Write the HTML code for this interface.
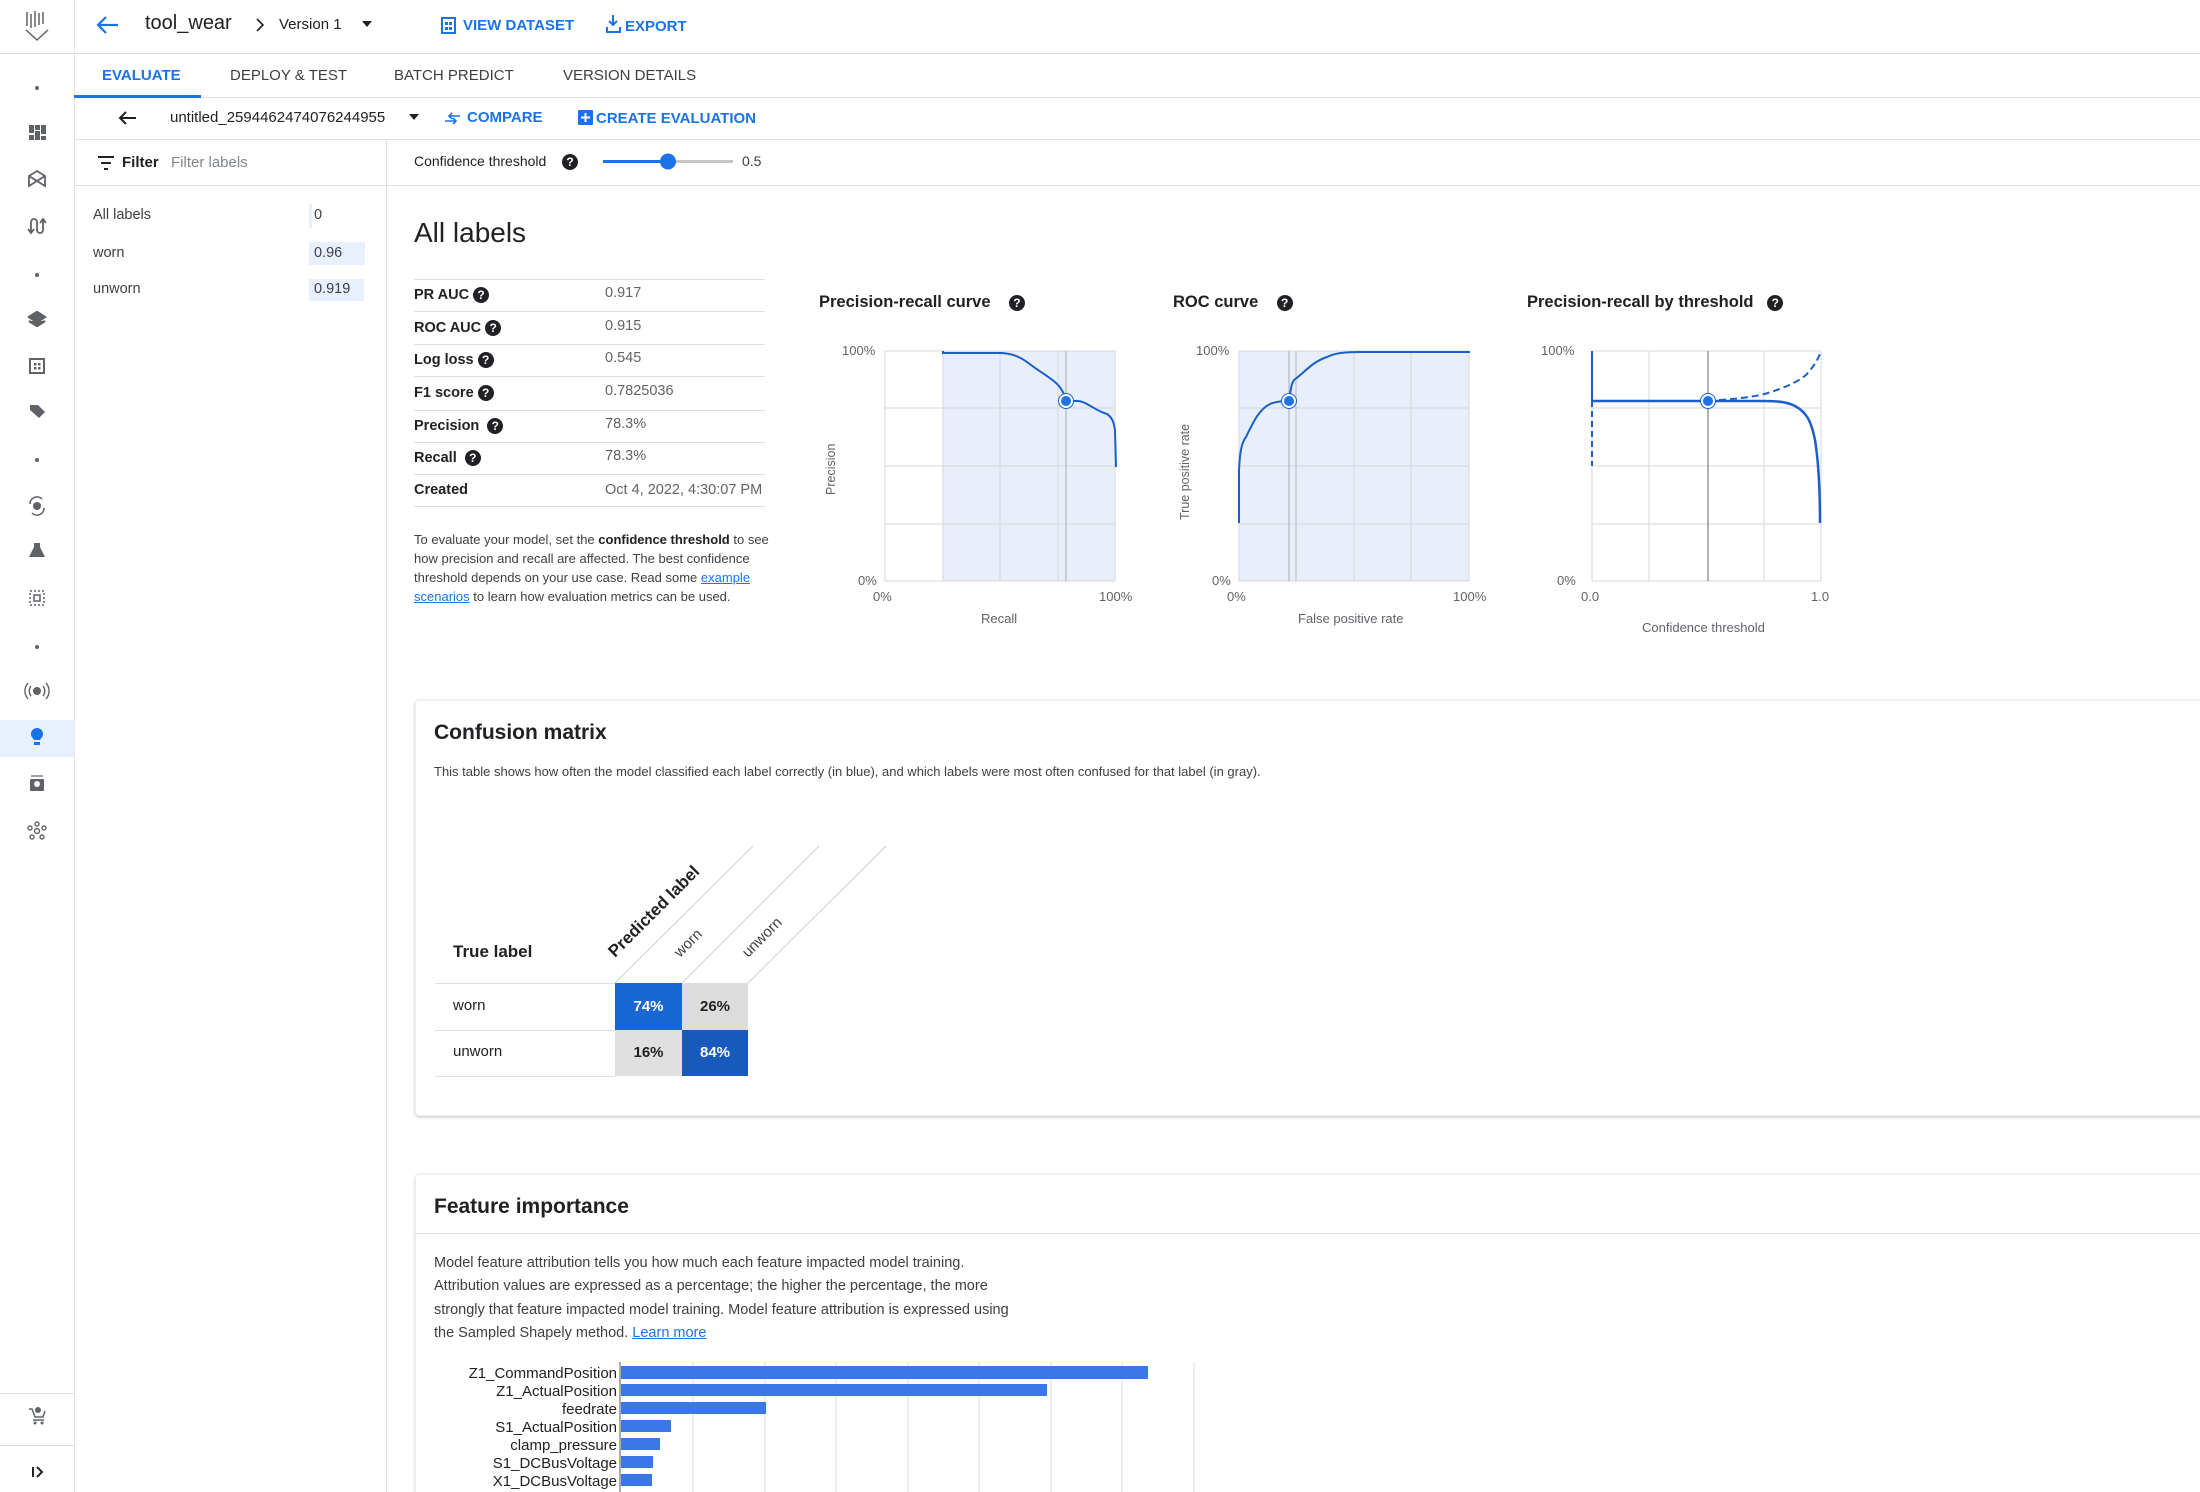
<!DOCTYPE html>
<html><head><meta charset="utf-8">
<style>
*{margin:0;padding:0;box-sizing:border-box}
html,body{width:2200px;height:1492px;overflow:hidden}
body{background:#fff;font-family:"Liberation Sans",Arial,sans-serif;color:#202124;position:relative}
.a{position:absolute;white-space:nowrap}
.blue{color:#1a73e8}
.hl{position:absolute;height:1px;background:#e0e0e0}
.vl{position:absolute;width:1px;background:#e0e0e0}
.q{display:inline-block;width:16px;height:16px;border-radius:50%;background:#202124;color:#fff;font-size:12px;font-weight:bold;text-align:center;line-height:16px;vertical-align:middle}
.met{position:absolute;left:414px;font-size:14.5px;font-weight:bold}
.val{position:absolute;left:605px;font-size:14.5px;color:#5f6368}
</style></head><body>

<div class="vl" style="left:74px;top:0;height:1492px;background:#e6e6e6"></div>
<div style="position:absolute;left:0;top:720px;width:74px;height:37px;background:#e8f0fe"></div>
<div class="hl" style="left:0;top:1393px;width:74px"></div>
<div class="hl" style="left:0;top:1445px;width:74px"></div>
<div class="hl" style="left:0;top:53px;width:2200px"></div>
<div class="hl" style="left:74px;top:97px;width:2126px"></div>
<div class="hl" style="left:74px;top:139px;width:2126px"></div>
<div style="position:absolute;left:74px;top:95px;width:127px;height:3px;background:#1a73e8"></div>
<div class="vl" style="left:386px;top:139px;height:1353px"></div>
<div class="hl" style="left:74px;top:185px;width:312px"></div>
<div class="hl" style="left:386px;top:185px;width:1814px"></div>

<!-- confusion card -->
<div style="position:absolute;left:415px;top:700px;width:1800px;height:416px;border:1px solid #eee;box-shadow:0 1px 3px rgba(0,0,0,.25);border-radius:4px"></div>
<!-- feature card -->
<div style="position:absolute;left:415px;top:1174px;width:1800px;height:330px;border:1px solid #eee;box-shadow:0 1px 3px rgba(0,0,0,.2);border-radius:4px"></div>

<svg class="a" style="left:0;top:0" width="2200" height="1492" viewBox="0 0 2200 1492" font-family="Liberation Sans, Arial, sans-serif">
 <g stroke="#5f6368" stroke-width="1.5" fill="none">
  <path d="M27 12v14M31 14v14M35 11v16M39 13v12M43 12v12"/>
  <path d="M26 30l11 10 11-10"/>
 </g>
 <g fill="#5f6368" stroke="#5f6368">
  <circle cx="37" cy="88" r="2" stroke="none"/>
  <g stroke="none"><rect x="29" y="125" width="5" height="8"/><rect x="29" y="135" width="5" height="5"/><rect x="35" y="125" width="5" height="5"/><rect x="35" y="131" width="5" height="9"/><rect x="41" y="125" width="5" height="9"/><rect x="41" y="136" width="5" height="4"/></g>
  <path d="M29 176l8-5 8 5v10l-8-5-8 5z M29 176l16 10 M45 176l-16 10" fill="none" stroke-width="1.8"/>
  <path d="M31 232v-10a3 3 0 0 1 6 0v8a3 3 0 0 0 6 0v-10 M28 229l3 4 3-4 M40 223l3-4 3 4" fill="none" stroke-width="1.8"/>
  <circle cx="37" cy="275" r="2" stroke="none"/>
  <path d="M29 317l8-5 8 5-8 5z M29 321l8 5 8-5" stroke-width="2.5" stroke-linejoin="round"/>
  <rect x="30" y="359" width="14" height="14" fill="none" stroke-width="2"/>
  <g stroke="none"><rect x="34" y="363" width="2.5" height="2.5"/><rect x="38" y="363" width="2.5" height="2.5"/><rect x="34" y="367" width="2.5" height="2.5"/><rect x="38" y="367" width="2.5" height="2.5"/></g>
  <path d="M30 405h8l7 7-6 6-9-8z" stroke="none"/>
  <circle cx="37" cy="460" r="2" stroke="none"/>
  <circle cx="37" cy="506" r="4" stroke="none"/><path d="M30 504a7 7 0 0 1 12-5 M44 508a7 7 0 0 1-12 5" fill="none" stroke-width="1.6"/>
  <path d="M34 543h6v4l5 10h-16l5-10z" stroke="none"/>
  <rect x="30" y="591" width="14" height="14" fill="none" stroke-width="1.5" stroke-dasharray="2 2"/><rect x="34" y="595" width="6" height="6" fill="none" stroke-width="1.5"/>
  <circle cx="37" cy="647" r="2" stroke="none"/>
  <circle cx="37" cy="691" r="4" stroke="none"/><path d="M31 686a8 8 0 0 0 0 10 M43 686a8 8 0 0 1 0 10 M28 683a12 12 0 0 0 0 16 M46 683a12 12 0 0 1 0 16" fill="none" stroke-width="1.4"/>
  <path d="M31 734a6 6 0 0 1 12 0c0 3-2 4-3 6h-6c-1-2-3-3-3-6z M34 742h6v3h-6z" fill="#1a73e8" stroke="none"/>
  <rect x="30" y="779" width="14" height="12" rx="1" stroke="none"/><path d="M31 776h12" stroke-width="1.2"/><circle cx="37" cy="784" r="3" fill="#fff" stroke="none"/>
  <g fill="none" stroke-width="1.4"><circle cx="37" cy="831" r="2.5"/><circle cx="37" cy="824" r="2"/><circle cx="30" cy="828" r="2"/><circle cx="44" cy="828" r="2"/><circle cx="32" cy="837" r="2"/><circle cx="42" cy="837" r="2"/></g>
  <path d="M29 1409h3l3 8h8l2-6 M33 1420h11" fill="none" stroke-width="1.5"/><circle cx="38" cy="1410" r="3" stroke="none"/><circle cx="35" cy="1423" r="1.5" stroke="none"/><circle cx="42" cy="1423" r="1.5" stroke="none"/>
  <path d="M33 1467v10 M37 1467l5 5-5 5" fill="none" stroke="#202124" stroke-width="2"/>
 </g>
 <path d="M118 25h-20 M106 17l-8 8 8 8" fill="none" stroke="#1a73e8" stroke-width="2.2"/>
 <path d="M257 19l6 6-6 6" fill="none" stroke="#202124" stroke-width="1.6"/>
 <path d="M362 21h10l-5 6z" fill="#202124"/>
 <rect x="442" y="18" width="13" height="15" fill="none" stroke="#1a73e8" stroke-width="2"/>
 <g fill="#1a73e8"><rect x="445" y="22" width="3" height="3"/><rect x="449" y="22" width="3" height="3"/><rect x="445" y="27" width="3" height="3"/><rect x="449" y="27" width="3" height="3"/></g>
 <path d="M613 15v10 M609 21l4 4 4-4 M607 27v5h13v-5" fill="none" stroke="#1a73e8" stroke-width="2"/>
 <path d="M136 118h-16 M126 112l-6 6 6 6" fill="none" stroke="#202124" stroke-width="2"/>
 <path d="M409 114h10l-5 6z" fill="#202124"/>
 <path d="M445 121h10 M453 118l3 3-3 3 M450 116h10 M452 113l-3 3 3 3" fill="none" stroke="#1a73e8" stroke-width="1.6"/>
 <rect x="578" y="110" width="15" height="15" rx="1" fill="#1a73e8"/><path d="M585.5 113v9 M581 117.5h9" stroke="#fff" stroke-width="2"/>
 <path d="M98 157h16 M101 163h10 M104 169h4" stroke="#202124" stroke-width="2"/>
 <rect x="603" y="160" width="130" height="3" fill="#c6c6c6"/>
 <rect x="603" y="160" width="65" height="3" fill="#1a73e8"/>
 <circle cx="668" cy="161.5" r="8" fill="#1a73e8"/>

 <g font-size="13" fill="#5f6368">
 <!-- PR -->
 <rect x="943" y="351" width="172" height="230" fill="#e8eefa"/>
 <g stroke="#d5d7da" stroke-width="1"><line x1="885" y1="351" x2="1115" y2="351"/><line x1="885" y1="408" x2="1115" y2="408"/><line x1="885" y1="466" x2="1115" y2="466"/><line x1="885" y1="524" x2="1115" y2="524"/><line x1="885" y1="581" x2="1115" y2="581"/><line x1="885" y1="351" x2="885" y2="581"/><line x1="943" y1="351" x2="943" y2="581"/><line x1="1000" y1="351" x2="1000" y2="581"/><line x1="1058" y1="351" x2="1058" y2="581"/><line x1="1115" y1="351" x2="1115" y2="581"/></g>
 <line x1="1066" y1="351" x2="1066" y2="581" stroke="#aaa"/>
 <path d="M943 351V353H1002C1015 354 1022 358 1031 365C1040 372 1052 378 1059 386C1063 391 1065 396 1066 401H1075C1086 400 1093 410 1107 414C1113 418 1114 424 1115 430L1116 467" fill="none" stroke="#1a5fc8" stroke-width="2"/>
 <circle cx="1066" cy="401" r="6" fill="#1a73e8" stroke="#fff" stroke-width="2"/><circle cx="1066" cy="401" r="7.5" fill="none" stroke="#1a5fc8" stroke-width="1"/>
 <text x="842" y="355">100%</text><text x="858" y="585">0%</text>
 <text x="873" y="601">0%</text><text x="1099" y="601">100%</text>
 <text x="981" y="623">Recall</text>
 <text transform="translate(835 495) rotate(-90)" font-size="12.5">Precision</text>

 <!-- ROC -->
 <rect x="1239" y="351" width="230" height="230" fill="#e8eefa"/>
 <g stroke="#d5d7da"><line x1="1239" y1="351" x2="1469" y2="351"/><line x1="1239" y1="408" x2="1469" y2="408"/><line x1="1239" y1="466" x2="1469" y2="466"/><line x1="1239" y1="524" x2="1469" y2="524"/><line x1="1239" y1="581" x2="1469" y2="581"/><line x1="1239" y1="351" x2="1239" y2="581"/><line x1="1296" y1="351" x2="1296" y2="581"/><line x1="1354" y1="351" x2="1354" y2="581"/><line x1="1411" y1="351" x2="1411" y2="581"/><line x1="1469" y1="351" x2="1469" y2="581"/></g>
 <line x1="1289" y1="351" x2="1289" y2="581" stroke="#aaa"/>
 <line x1="1296" y1="351" x2="1296" y2="581" stroke="#bbb"/>
 <path d="M1239 523V470C1240 450 1242 442 1246 437C1252 425 1258 410 1270 404C1280 400 1286 402 1289 400C1291 390 1291 384 1294 380C1305 372 1312 362 1327 357C1335 353 1345 352 1360 352H1470" fill="none" stroke="#1a5fc8" stroke-width="2"/>
 <circle cx="1289" cy="401" r="6" fill="#1a73e8" stroke="#fff" stroke-width="2"/><circle cx="1289" cy="401" r="7.5" fill="none" stroke="#1a5fc8"/>
 <text x="1196" y="355">100%</text><text x="1212" y="585">0%</text>
 <text x="1227" y="601">0%</text><text x="1453" y="601">100%</text>
 <text x="1298" y="623">False positive rate</text>
 <text transform="translate(1189 520) rotate(-90)" font-size="12.5">True positive rate</text>

 <!-- threshold -->
 <g stroke="#d5d7da"><line x1="1592" y1="351" x2="1821" y2="351"/><line x1="1592" y1="408" x2="1821" y2="408"/><line x1="1592" y1="466" x2="1821" y2="466"/><line x1="1592" y1="524" x2="1821" y2="524"/><line x1="1592" y1="581" x2="1821" y2="581"/><line x1="1592" y1="351" x2="1592" y2="581"/><line x1="1649" y1="351" x2="1649" y2="581"/><line x1="1764" y1="351" x2="1764" y2="581"/><line x1="1821" y1="351" x2="1821" y2="581"/></g>
 <line x1="1708" y1="351" x2="1708" y2="581" stroke="#666"/>
 <path d="M1592 351v50" fill="none" stroke="#1a5fc8" stroke-width="2"/>
 <path d="M1592 401v65" fill="none" stroke="#1a5fc8" stroke-width="2" stroke-dasharray="6 4"/>
 <path d="M1592 401H1760C1780 401 1787 402 1795 406C1806 412 1811 420 1815 440C1819 465 1820 500 1820 523" fill="none" stroke="#1a5fc8" stroke-width="2.5"/>
 <path d="M1708 401C1735 399 1755 397 1768 393C1790 386 1800 380 1806 375C1814 366 1818 360 1821 351" fill="none" stroke="#1a5fc8" stroke-width="2" stroke-dasharray="7 4"/>
 <circle cx="1708" cy="401" r="6" fill="#1a73e8" stroke="#fff" stroke-width="2"/><circle cx="1708" cy="401" r="7.5" fill="none" stroke="#1a5fc8"/>
 <text x="1541" y="355">100%</text><text x="1557" y="585">0%</text>
 <text x="1581" y="601">0.0</text><text x="1811" y="601">1.0</text>
 <text x="1642" y="632">Confidence threshold</text>
 </g>

 <g stroke="#d0d0d0" stroke-width="1">
  <line x1="615" y1="983" x2="753" y2="846"/><line x1="682" y1="983" x2="819" y2="846"/><line x1="748" y1="983" x2="886" y2="846"/>
 </g>
 <text transform="translate(615 958) rotate(-45)" font-size="17" font-weight="bold" fill="#202124">Predicted label</text>
 <text transform="translate(680 958) rotate(-45)" font-size="15" fill="#3c4043">worn</text>
 <text transform="translate(748 958) rotate(-45)" font-size="15" fill="#3c4043">unworn</text>

 <g stroke="#dadce0"><line x1="693" y1="1362" x2="693" y2="1492"/><line x1="765" y1="1362" x2="765" y2="1492"/><line x1="836" y1="1362" x2="836" y2="1492"/><line x1="908" y1="1362" x2="908" y2="1492"/><line x1="979" y1="1362" x2="979" y2="1492"/><line x1="1051" y1="1362" x2="1051" y2="1492"/><line x1="1122" y1="1362" x2="1122" y2="1492"/><line x1="1194" y1="1362" x2="1194" y2="1492"/></g>
 <line x1="620" y1="1362" x2="620" y2="1492" stroke="#555"/>
 <g fill="#3b78e7">
  <rect x="621" y="1366" width="527" height="13"/><rect x="621" y="1384" width="426" height="12"/><rect x="621" y="1402" width="145" height="12"/>
  <rect x="621" y="1420" width="50" height="12"/><rect x="621" y="1438" width="39" height="12"/><rect x="621" y="1456" width="32" height="12"/><rect x="621" y="1474" width="31" height="12"/>
 </g>
 <g font-size="15" fill="#202124" text-anchor="end">
  <text x="617" y="1378">Z1_CommandPosition</text><text x="617" y="1396">Z1_ActualPosition</text><text x="617" y="1414">feedrate</text>
  <text x="617" y="1432">S1_ActualPosition</text><text x="617" y="1450">clamp_pressure</text><text x="617" y="1468">S1_DCBusVoltage</text><text x="617" y="1486">X1_DCBusVoltage</text>
 </g>
</svg>

<div class="a" style="left:145px;top:12px;font-size:20px">tool_wear</div>
<div class="a" style="left:279px;top:16px;font-size:15px">Version 1</div>
<div class="a blue" style="left:463px;top:17px;font-size:15px;font-weight:bold">VIEW DATASET</div>
<div class="a blue" style="left:625px;top:18px;font-size:15px;font-weight:bold">EXPORT</div>
<div class="a blue" style="left:102px;top:67px;font-size:15px;font-weight:bold">EVALUATE</div>
<div class="a" style="left:230px;top:67px;font-size:15px;color:#3c4043">DEPLOY &amp; TEST</div>
<div class="a" style="left:394px;top:67px;font-size:15px;color:#3c4043">BATCH PREDICT</div>
<div class="a" style="left:563px;top:67px;font-size:15px;color:#3c4043">VERSION DETAILS</div>
<div class="a" style="left:170px;top:109px;font-size:15px">untitled_2594462474076244955</div>
<div class="a blue" style="left:467px;top:109px;font-size:15px;font-weight:bold">COMPARE</div>
<div class="a blue" style="left:596px;top:110px;font-size:15px;font-weight:bold">CREATE EVALUATION</div>
<div class="a" style="left:122px;top:154px;font-size:15px;font-weight:bold">Filter</div>
<div class="a" style="left:171px;top:154px;font-size:15px;color:#80868b">Filter labels</div>
<div class="a" style="left:93px;top:207px;font-size:14.5px;color:#3c4043">All labels</div>
<div style="position:absolute;left:309px;top:204px;width:3px;height:24px;background:#e8f0fe"></div>
<div class="a" style="left:314px;top:207px;font-size:14.5px;color:#3c4043">0</div>
<div class="a" style="left:93px;top:245px;font-size:14.5px;color:#3c4043">worn</div>
<div style="position:absolute;left:309px;top:242px;width:56px;height:23px;background:#e8f0fe"></div>
<div class="a" style="left:314px;top:245px;font-size:14.5px;color:#3c4043">0.96</div>
<div class="a" style="left:93px;top:281px;font-size:14.5px;color:#3c4043">unworn</div>
<div style="position:absolute;left:309px;top:279px;width:55px;height:22px;background:#e8f0fe"></div>
<div class="a" style="left:314px;top:281px;font-size:14.5px;color:#3c4043">0.919</div>
<div class="a" style="left:414px;top:153px;font-size:14px">Confidence threshold</div>
<div class="a" style="left:562px;top:153px"><span class="q">?</span></div>
<div class="a" style="left:742px;top:153px;font-size:14px;color:#3c4043">0.5</div>

<div class="a" style="left:414px;top:217px;font-size:28px">All labels</div>
<div class="hl" style="left:414px;top:279px;width:351px"></div>
<div class="hl" style="left:414px;top:311px;width:351px"></div>
<div class="hl" style="left:414px;top:344px;width:351px"></div>
<div class="hl" style="left:414px;top:376px;width:351px"></div>
<div class="hl" style="left:414px;top:410px;width:351px"></div>
<div class="hl" style="left:414px;top:442px;width:351px"></div>
<div class="hl" style="left:414px;top:474px;width:351px"></div>
<div class="hl" style="left:414px;top:506px;width:351px"></div>
<div class="met" style="top:287px">PR AUC <span class="q">?</span></div><div class="val" style="top:285px">0.917</div>
<div class="met" style="top:320px">ROC AUC <span class="q">?</span></div><div class="val" style="top:318px">0.915</div>
<div class="met" style="top:352px">Log loss <span class="q">?</span></div><div class="val" style="top:350px">0.545</div>
<div class="met" style="top:385px">F1 score <span class="q">?</span></div><div class="val" style="top:383px">0.7825036</div>
<div class="met" style="top:418px">Precision &nbsp;<span class="q">?</span></div><div class="val" style="top:416px">78.3%</div>
<div class="met" style="top:450px">Recall &nbsp;<span class="q">?</span></div><div class="val" style="top:448px">78.3%</div>
<div class="met" style="top:482px">Created</div><div class="val" style="top:482px">Oct 4, 2022, 4:30:07 PM</div>
<div style="position:absolute;left:414px;top:530px;width:380px;font-size:13px;line-height:19px;color:#3c4043">To evaluate your model, set the <b style="color:#202124">confidence threshold</b> to see how precision and recall are affected. The best confidence threshold depends on your use case. Read some <span class="blue" style="text-decoration:underline">example scenarios</span> to learn how evaluation metrics can be used.</div>

<div class="a" style="left:819px;top:293px;font-size:16.5px;font-weight:bold">Precision-recall curve &nbsp;&nbsp;&nbsp;<span class="q">?</span></div>
<div class="a" style="left:1173px;top:293px;font-size:16.5px;font-weight:bold">ROC curve &nbsp;&nbsp;&nbsp;<span class="q">?</span></div>
<div class="a" style="left:1527px;top:293px;font-size:16.5px;font-weight:bold">Precision-recall by threshold &nbsp;&nbsp;<span class="q">?</span></div>

<div class="a" style="left:434px;top:721px;font-size:21px;font-weight:bold;color:#202124">Confusion matrix</div>
<div class="a" style="left:434px;top:764px;font-size:13px;color:#3c4043">This table shows how often the model classified each label correctly (in blue), and which labels were most often confused for that label (in gray).</div>
<div class="a" style="left:453px;top:942px;font-size:17px;font-weight:bold">True label</div>
<div class="hl" style="left:435px;top:983px;width:180px"></div>
<div class="hl" style="left:435px;top:1030px;width:180px"></div>
<div class="hl" style="left:435px;top:1076px;width:180px"></div>
<div class="a" style="left:453px;top:997px;font-size:15px">worn</div>
<div class="a" style="left:453px;top:1043px;font-size:15px">unworn</div>
<div class="a" style="left:615px;top:983px;width:67px;height:47px;background:#1967d2;color:#fff;font-size:15px;font-weight:bold;text-align:center;line-height:47px">74%</div>
<div class="a" style="left:682px;top:983px;width:66px;height:47px;background:#dcdcdc;color:#202124;font-size:15px;font-weight:bold;text-align:center;line-height:47px">26%</div>
<div class="a" style="left:615px;top:1030px;width:67px;height:46px;background:#e0e0e0;color:#202124;font-size:15px;font-weight:bold;text-align:center;line-height:46px">16%</div>
<div class="a" style="left:682px;top:1030px;width:66px;height:46px;background:#185abc;color:#fff;font-size:15px;font-weight:bold;text-align:center;line-height:46px">84%</div>

<div class="hl" style="left:415px;top:1233px;width:1785px"></div>
<div class="a" style="left:434px;top:1195px;font-size:21px;font-weight:bold">Feature importance</div>
<div style="position:absolute;left:434px;top:1252px;width:585px;font-size:14.5px;line-height:23.3px;color:#3c4043">Model feature attribution tells you how much each feature impacted model training. Attribution values are expressed as a percentage; the higher the percentage, the more strongly that feature impacted model training. Model feature attribution is expressed using the Sampled Shapely method. <span class="blue" style="text-decoration:underline">Learn more</span></div>
</body></html>
